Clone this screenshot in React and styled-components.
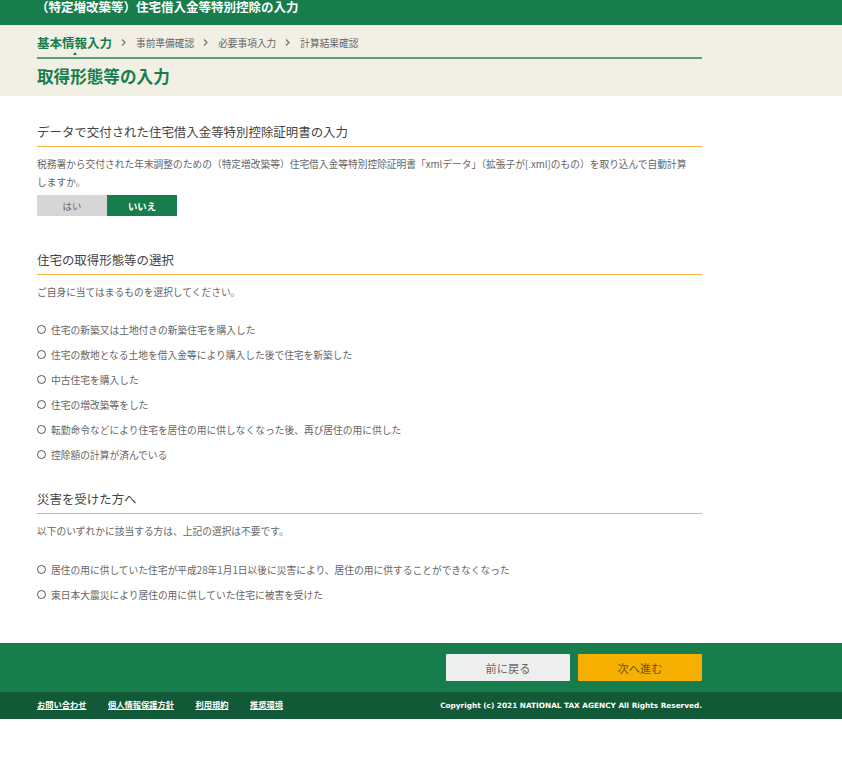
import React, { useState } from "react";
import styled, { createGlobalStyle } from "styled-components";

const GlobalStyle = createGlobalStyle`
  body {
    margin: 0;
    background: #fff;
    font-family: "Noto Sans CJK JP", "Liberation Sans", sans-serif;
    color: #555;
  }
`;

const TopBar = styled.header`
  height: 25px;
  background: #187d4c;
  border-bottom: 1px solid #e4e9dc;
  padding-left: 37px;
`;

const AppTitle = styled.h1`
  margin: 0 0 0 -1px;
  font-size: 12.5px;
  line-height: 14px;
  font-weight: 700;
  color: #fff;
`;

const Band = styled.div`
  height: 70px;
  background: #f2efe4;
  padding: 0 140px 0 37px;
`;

const Steps = styled.nav`
  display: flex;
  align-items: center;
  height: 33px;
  padding-top: 2px;
  box-sizing: border-box;
  border-bottom: 2px solid #5c9d78;
`;

const Step = styled.span`
  position: relative;
  font-size: ${(p) => (p.$active ? "12.5px" : "9.7px")};
  font-weight: ${(p) => (p.$active ? 700 : 400)};
  color: ${(p) => (p.$active ? "#187d4c" : "#666")};

  &::after {
    content: "";
    display: ${(p) => (p.$active ? "block" : "none")};
    position: absolute;
    left: 50%;
    bottom: -3px;
    margin-left: -2px;
    border: 2px solid transparent;
    border-top: 0;
    border-bottom: 3px solid #187d4c;
  }
`;

const Chevron = styled.svg`
  width: 5px;
  height: 7px;
  margin: 0 10px 0 9px;
  fill: none;
  stroke: #777;
  stroke-width: 1.3;
`;

const PageTitle = styled.h2`
  margin: 6px 0 0;
  font-size: 16.6px;
  line-height: 22px;
  font-weight: 700;
  color: #187d4c;
`;

const Main = styled.main`
  width: 665px;
  margin-left: 37px;
  height: 547px;
  padding-top: 27px;
  box-sizing: border-box;
`;

const Section = styled.section`
  margin-bottom: ${(p) => p.$gap || "0"};
`;

const SectionTitle = styled.h3`
  margin: 0;
  height: 24px;
  box-sizing: border-box;
  font-size: 12.45px;
  line-height: 18px;
  font-weight: 400;
  color: #444;
  border-bottom: 1px solid #f7b045;
`;

const Lead = styled.p`
  margin: 8px 0 0;
  font-size: 9.72px;
  line-height: 18px;
  color: #666;
`;

const Toggle = styled.div`
  display: flex;
  margin-top: 4px;
`;

const ToggleButton = styled.button`
  width: 70px;
  height: 21px;
  padding: 0;
  border: 0;
  font: inherit;
  font-size: 9.4px;
  font-weight: ${(p) => (p.$on ? 700 : 400)};
  color: ${(p) => (p.$on ? "#fff" : "#666")};
  background: ${(p) => (p.$on ? "#187d4c" : "#d6d6d6")};
`;

const RadioList = styled.div`
  display: flex;
  flex-direction: column;
  margin-top: ${(p) => p.$top};
`;

const RadioRow = styled.label`
  display: flex;
  align-items: center;
  height: 25px;
  font-size: 9.74px;
  color: #666;
`;

const RadioMark = styled.input.attrs({ type: "radio" })`
  appearance: none;
  width: 9px;
  height: 9px;
  margin: 0 5px 0 0;
  border: 1.4px solid #555;
  border-radius: 50%;
  background: #fff;
  box-sizing: border-box;
`;

const ActionBar = styled.div`
  display: flex;
  justify-content: flex-end;
  gap: 8px;
  height: 49px;
  box-sizing: border-box;
  padding: 11px 140px 0 0;
  background: #187d4c;
`;

const ActionButton = styled.button`
  width: 124px;
  height: 27px;
  padding: 0;
  border: 0;
  border-radius: 1px;
  font: inherit;
  font-size: 11.2px;
  color: ${(p) => (p.$primary ? "#6b5410" : "#666")};
  background: ${(p) => (p.$primary ? "#f5b000" : "#eeeeee")};
`;

const FooterBar = styled.footer`
  display: flex;
  align-items: center;
  justify-content: space-between;
  height: 27px;
  box-sizing: border-box;
  padding: 0 140px 0 37px;
  background: #125a37;
`;

const FooterLinks = styled.div`
  display: flex;
  gap: 21.5px;
  margin-top: -3px;
`;

const FooterLink = styled.a`
  font-size: 8.25px;
  font-weight: 700;
  color: #fff;
  text-decoration: underline;
`;

const Copyright = styled.small`
  font-family: "DejaVu Sans", sans-serif;
  font-size: 7.33px;
  font-weight: 700;
  color: #fff;
`;

const steps = ["事前準備確認", "必要事項入力", "計算結果確認"];

const housingOptions = [
  "住宅の新築又は土地付きの新築住宅を購入した",
  "住宅の敷地となる土地を借入金等により購入した後で住宅を新築した",
  "中古住宅を購入した",
  "住宅の増改築等をした",
  "転勤命令などにより住宅を居住の用に供しなくなった後、再び居住の用に供した",
  "控除額の計算が済んでいる",
];

const disasterOptions = [
  "居住の用に供していた住宅が平成28年1月1日以後に災害により、居住の用に供することができなくなった",
  "東日本大震災により居住の用に供していた住宅に被害を受けた",
];

const links = ["お問い合わせ", "個人情報保護方針", "利用規約", "推奨環境"];

const ArrowIcon = () => (
  <Chevron viewBox="0 0 5 7">
    <path d="M1 .5 4 3.5 1 6.5" />
  </Chevron>
);

const App = () => {
  const [useXml, setUseXml] = useState(false);

  return (
    <>
      <GlobalStyle />
      <TopBar>
        <AppTitle>（特定増改築等）住宅借入金等特別控除の入力</AppTitle>
      </TopBar>
      <Band>
        <Steps>
          <Step $active>基本情報入力</Step>
          {steps.map((step) => (
            <React.Fragment key={step}>
              <ArrowIcon />
              <Step>{step}</Step>
            </React.Fragment>
          ))}
        </Steps>
        <PageTitle>取得形態等の入力</PageTitle>
      </Band>
      <Main>
        <Section $gap="35px">
          <SectionTitle>データで交付された住宅借入金等特別控除証明書の入力</SectionTitle>
          <Lead>
            税務署から交付された年末調整のための（特定増改築等）住宅借入金等特別控除証明書「xmlデータ」（拡張子が[.xml]のもの）を取り込んで自動計算<br />しますか。
          </Lead>
          <Toggle>
            <ToggleButton $on={useXml} onClick={() => setUseXml(true)}>はい</ToggleButton>
            <ToggleButton $on={!useXml} onClick={() => setUseXml(false)}>いいえ</ToggleButton>
          </Toggle>
        </Section>
        <Section $gap="23px">
          <SectionTitle>住宅の取得形態等の選択</SectionTitle>
          <Lead>ご自身に当てはまるものを選択してください。</Lead>
          <RadioList $top="16px">
            {housingOptions.map((option) => (
              <RadioRow key={option}>
                <RadioMark name="housing" />
                {option}
              </RadioRow>
            ))}
          </RadioList>
        </Section>
        <Section>
          <SectionTitle>災害を受けた方へ</SectionTitle>
          <Lead>以下のいずれかに該当する方は、上記の選択は不要です。</Lead>
          <RadioList $top="17px">
            {disasterOptions.map((option) => (
              <RadioRow key={option}>
                <RadioMark name="housing" />
                {option}
              </RadioRow>
            ))}
          </RadioList>
        </Section>
      </Main>
      <ActionBar>
        <ActionButton>前に戻る</ActionButton>
        <ActionButton $primary>次へ進む</ActionButton>
      </ActionBar>
      <FooterBar>
        <FooterLinks>
          {links.map((link) => (
            <FooterLink key={link} href="#">{link}</FooterLink>
          ))}
        </FooterLinks>
        <Copyright>Copyright (c) 2021 NATIONAL TAX AGENCY All Rights Reserved.</Copyright>
      </FooterBar>
    </>
  );
};

export default App;
